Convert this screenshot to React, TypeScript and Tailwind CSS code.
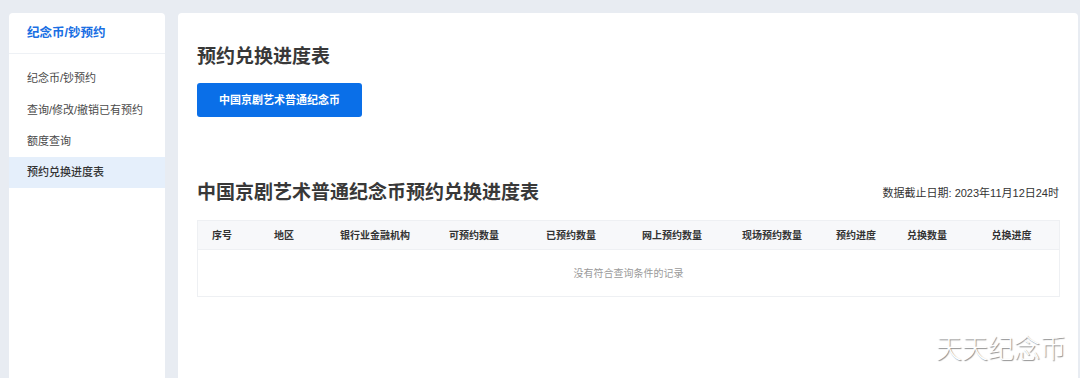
import React from 'react';

const menuItems = ['纪念币/钞预约', '查询/修改/撤销已有预约', '额度查询', '预约兑换进度表'];
const columns = ['序号', '地区', '银行业金融机构', '可预约数量', '已预约数量', '网上预约数量', '现场预约数量', '预约进度', '兑换数量', '兑换进度'];

export default function App() {
  return (
    <div
      className="relative h-[378px] overflow-hidden bg-[#e8ecf2] pt-[13px] pl-[9px] pr-[2px] flex gap-[13px]"
      style={{ fontFamily: '"Liberation Sans", "Noto Sans CJK SC", sans-serif' }}
    >
      <aside className="w-[156px] h-[400px] shrink-0 bg-white rounded-t-[4px]">
        <div className="h-[41px] flex items-center pl-[18px] border-b border-[#eef1f5] text-[12.5px] font-semibold text-[#1a6fe3]">
          纪念币/钞预约
        </div>
        <nav className="pt-[9px]">
          {menuItems.map((item, idx) => (
            <div
              key={item}
              className={`h-[31.3px] flex items-center pl-[18px] text-[11px] ${idx === 3 ? 'bg-[#e5effb] text-[#333] font-medium' : 'text-[#4a4a4a]'}`}
            >
              {item}
            </div>
          ))}
        </nav>
      </aside>

      <main className="flex-1 h-[400px] bg-white rounded-t-[4px] pl-[19px] pr-[18px] pt-[31px]">
        <h1 className="text-[19px] leading-[26px] font-bold text-[#383838]">预约兑换进度表</h1>
        <button className="mt-[13px] w-[165px] h-[34px] rounded-[3px] bg-[#0a6fe8] text-white text-[11px] font-bold">
          中国京剧艺术普通纪念币
        </button>

        <div className="mt-[63px] flex items-center justify-between pr-[1px]">
          <h2 className="text-[19px] leading-[26px] font-bold text-[#383838]">中国京剧艺术普通纪念币预约兑换进度表</h2>
          <span className="text-[11px] text-[#333]">数据截止日期: 2023年11月12日24时</span>
        </div>

        <div className="mt-[14px] w-[863px] border border-[#eef0f3]">
          <div className="h-[29px] bg-[#f7f8fa] border-b border-[#eef0f3] grid grid-cols-[48px_76px_106px_92px_102px_100px_100px_68px_74px_95px] items-center">
            {columns.map(col => (
              <div key={col} className="text-center text-[10px] font-bold text-[#333]">{col}</div>
            ))}
          </div>
          <div className="h-[46px] flex items-center justify-center text-[10px] text-[#9a9a9a]">
            没有符合查询条件的记录
          </div>
        </div>
      </main>

      <div
        className="absolute right-[14px] bottom-[16px] text-[26px] leading-none text-white font-light tracking-[0px]"
        style={{ textShadow: '1px 1px 1px rgba(0,0,0,0.45)' }}
      >
        天天纪念币
      </div>
    </div>
  );
}
